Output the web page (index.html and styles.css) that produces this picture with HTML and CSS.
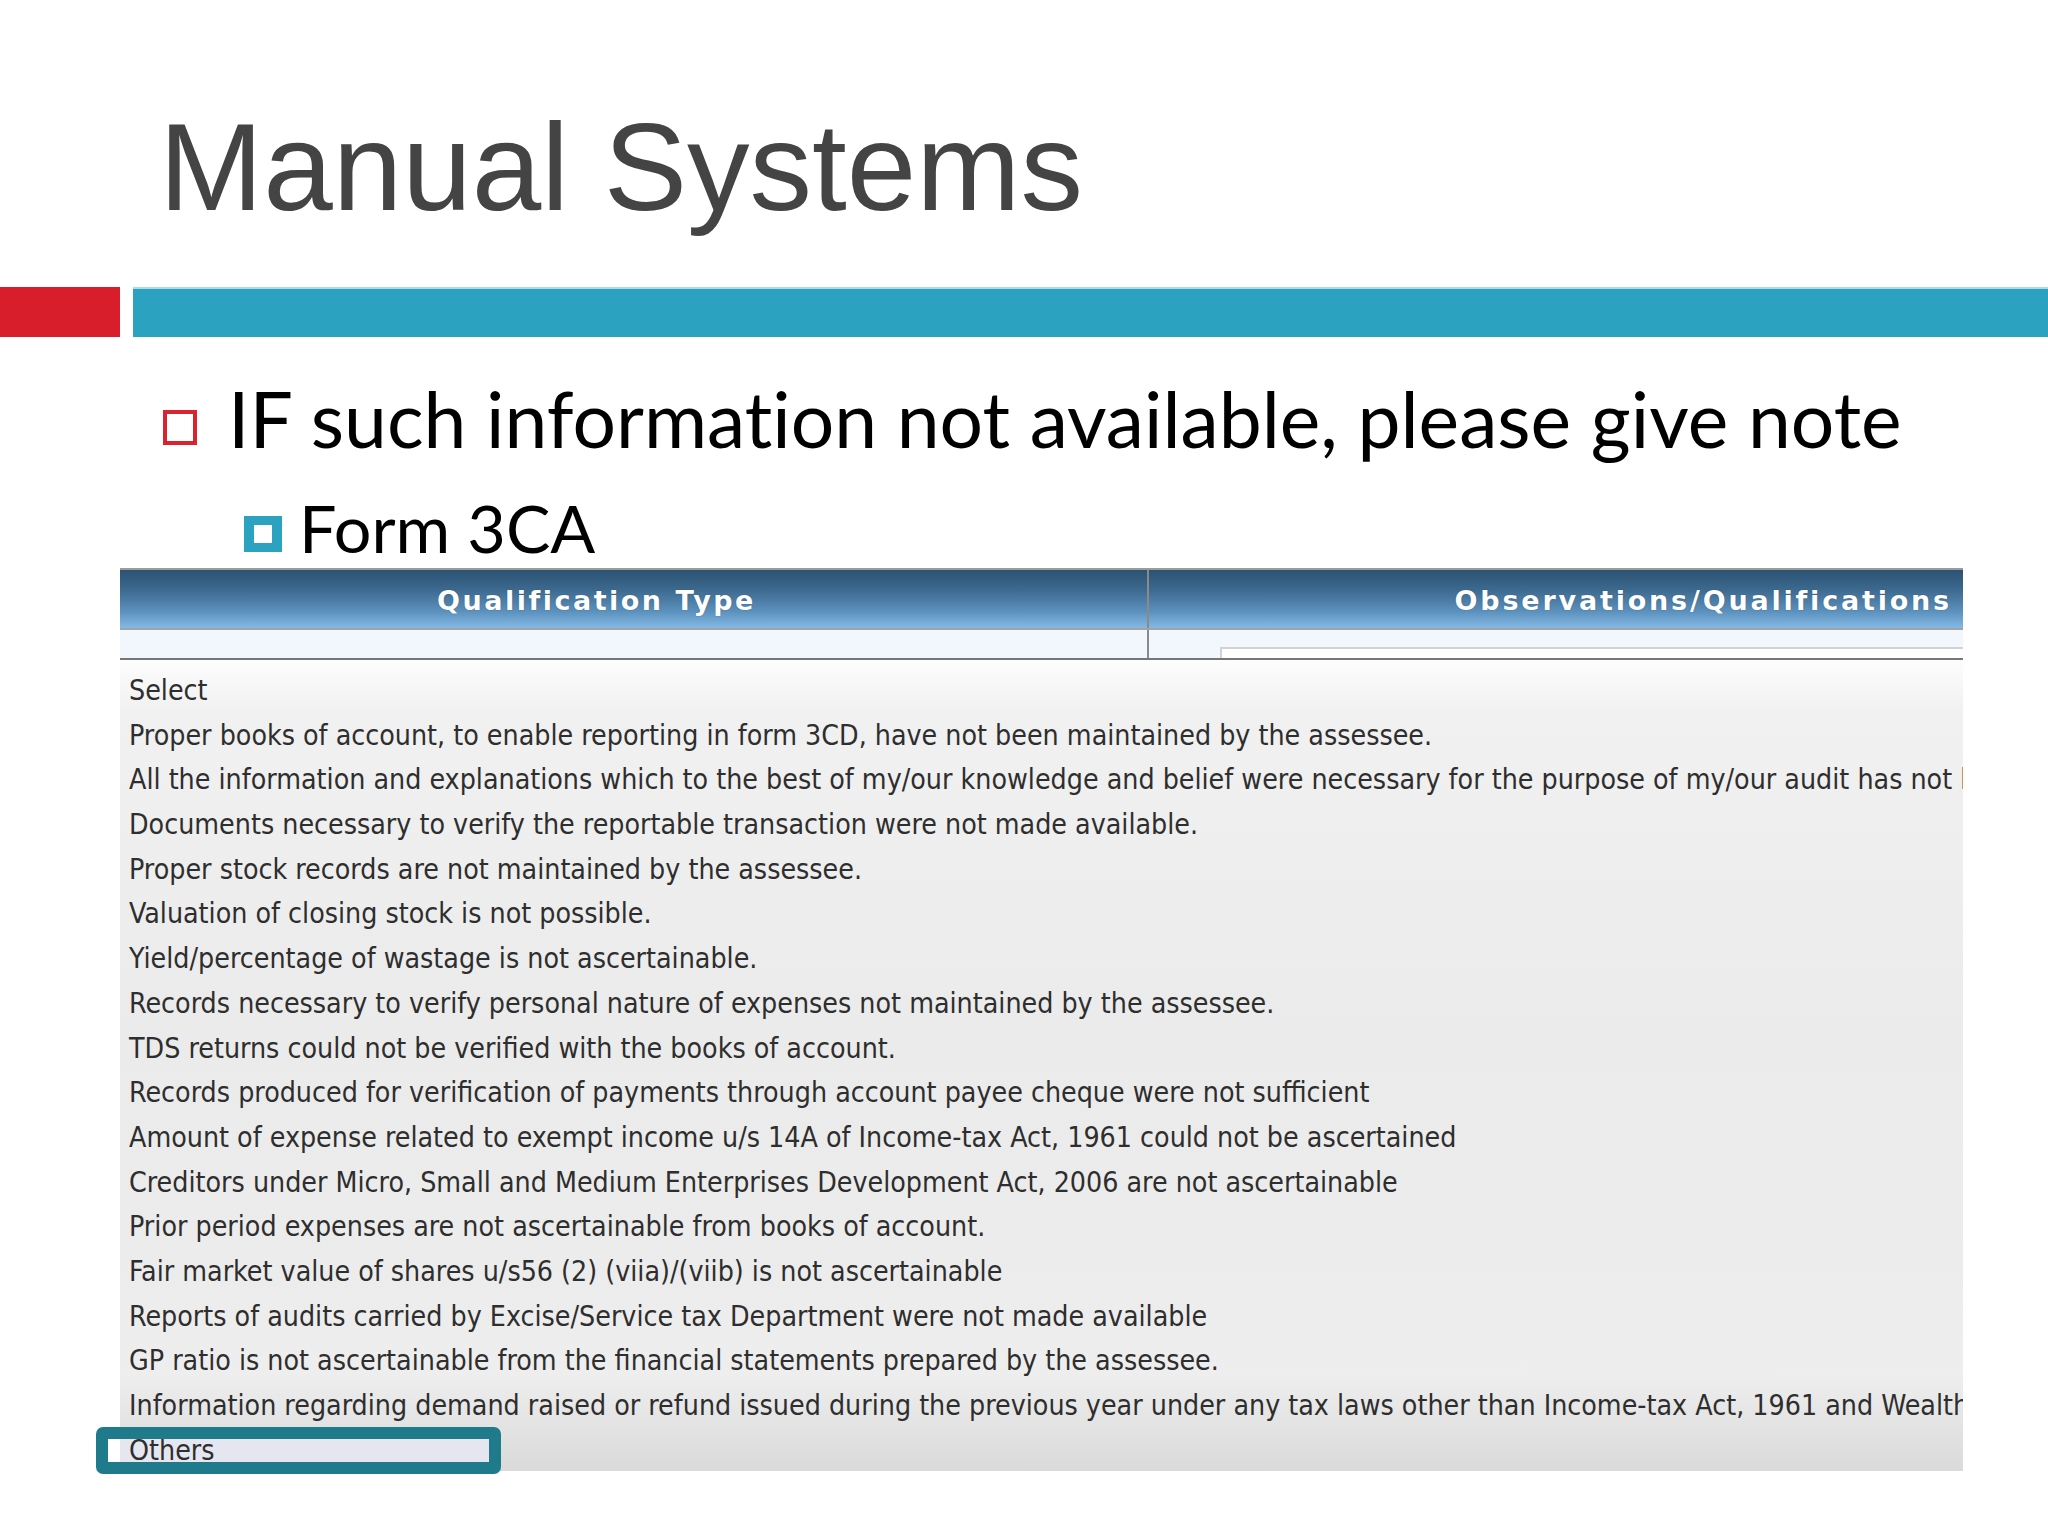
FILE: index.html
```html
<!DOCTYPE html>
<html>
<head>
<meta charset="utf-8">
<title>Manual Systems</title>
<link rel="stylesheet" href="styles.css">
</head>
<body>
<div class="slide">
  <h1 class="title">Manual Systems</h1>
  <div class="bars"><div class="bar-red"></div><div class="bar-blue"></div></div>
  <div class="b1"><span class="sq-red"></span><span class="b1-text">IF such information not available, please give note</span></div>
  <div class="b2"><span class="sq-blue"><span class="sq-blue-in"></span></span><span class="b2-text">Form 3CA</span></div>
  <div class="shot">
    <div class="hdr">
      <div class="hdr-c1">Qualification Type</div>
      <div class="hdr-div"></div>
      <div class="hdr-c2">Observations/Qualifications</div>
    </div>
    <div class="sub">
      <div class="sub-c1"></div>
      <div class="hdr-div"></div>
      <div class="sub-c2"><div class="field"></div></div>
    </div>
    <div class="list">
      <div class="opt">Select</div>
      <div class="opt">Proper books of account, to enable reporting in form 3CD, have not been maintained by the assessee.</div>
      <div class="opt">All the information and explanations which to the best of my/our knowledge and belief were necessary for the purpose of my/our audit has not been obtained.</div>
      <div class="opt">Documents necessary to verify the reportable transaction were not made available.</div>
      <div class="opt">Proper stock records are not maintained by the assessee.</div>
      <div class="opt">Valuation of closing stock is not possible.</div>
      <div class="opt">Yield/percentage of wastage is not ascertainable.</div>
      <div class="opt">Records necessary to verify personal nature of expenses not maintained by the assessee.</div>
      <div class="opt">TDS returns could not be verified with the books of account.</div>
      <div class="opt">Records produced for verification of payments through account payee cheque were not sufficient</div>
      <div class="opt">Amount of expense related to exempt income u/s 14A of Income-tax Act, 1961 could not be ascertained</div>
      <div class="opt">Creditors under Micro, Small and Medium Enterprises Development Act, 2006 are not ascertainable</div>
      <div class="opt">Prior period expenses are not ascertainable from books of account.</div>
      <div class="opt">Fair market value of shares u/s56 (2) (viia)/(viib) is not ascertainable</div>
      <div class="opt">Reports of audits carried by Excise/Service tax Department were not made available</div>
      <div class="opt">GP ratio is not ascertainable from the financial statements prepared by the assessee.</div>
      <div class="opt">Information regarding demand raised or refund issued during the previous year under any tax laws other than Income-tax Act, 1961 and Wealth tax Act</div>
      <div class="opt opt-sel">Others</div>
    </div>
  </div>
  <div class="callout"></div>
</div>
</body>
</html>
```

FILE: styles.css
```css
html, body {
  margin: 0;
  padding: 0;
  background: #ffffff;
}

.slide {
  position: relative;
  width: 2048px;
  height: 1536px;
  overflow: hidden;
}

.title {
  margin: 0;
  padding: 104px 0 0 159px;
  height: 125px;
  font-family: "Liberation Sans", Arial, sans-serif;
  font-weight: normal;
  font-size: 125px;
  line-height: 125px;
  color: #444444;
  white-space: nowrap;
}

.bars {
  margin-top: 58px;
  height: 50px;
  display: flex;
  gap: 13px;
}

.bar-red {
  width: 120px;
  background: #d91e2b;
}

.bar-blue {
  flex: 1;
  background: #2ba2c0;
  border-top: 2px solid #a9dbe8;
}

.b1 {
  margin-top: 38px;
  height: 86px;
  display: flex;
  align-items: flex-start;
  padding-left: 163px;
  font-family: Lato, "Open Sans", sans-serif;
  font-size: 76.8px;
  line-height: 86px;
  color: #000000;
  white-space: nowrap;
  font-variant-ligatures: none;
}

.sq-red {
  flex: none;
  width: 26px;
  height: 27px;
  margin-top: 35px;
  margin-right: 31px;
  border: 4px solid #d9232e;
}

.b2 {
  margin-top: 29px;
  height: 74px;
  display: flex;
  align-items: flex-start;
  padding-left: 244px;
  font-family: Lato, "Open Sans", sans-serif;
  font-size: 66.5px;
  line-height: 74px;
  color: #000000;
  white-space: nowrap;
}

.sq-blue {
  flex: none;
  width: 38px;
  height: 36px;
  margin-top: 26px;
  margin-right: 17px;
  background: #2ba3c0;
  display: flex;
  align-items: center;
  justify-content: center;
}

.sq-blue-in {
  width: 18px;
  height: 18px;
  background: #ffffff;
}

.shot {
  margin: 4px 0 0 120px;
  width: 1843px;
  height: 903px;
  overflow: hidden;
  font-family: "DejaVu Sans Condensed", "DejaVu Sans", sans-serif;
}

.hdr {
  height: 58px;
  display: flex;
  border-top: 2px solid #9b9b9b;
  border-bottom: 2px solid #a3a3a3;
  background: linear-gradient(#2c5273 0%, #3d6a90 35%, #5b8fbb 70%, #83b9e6 100%);
  color: #ffffff;
  font-family: "DejaVu Sans", sans-serif;
  font-weight: bold;
  font-size: 27px;
  line-height: 56px;
  white-space: nowrap;
  text-shadow: 0 0 1px rgba(0, 30, 60, 0.5);
}

.hdr-c1 {
  width: 1027px;
  padding: 3px 0 0 317px;
  box-sizing: border-box;
  letter-spacing: 2.5px;
}

.hdr-div {
  width: 2px;
  background: #8a8a8a;
}

.hdr-c2 {
  flex: 1;
  padding: 3px 11px 0 0;
  text-align: right;
  letter-spacing: 2.8px;
}

.sub {
  height: 28px;
  display: flex;
  background: #f2f7fd;
  border-bottom: 2px solid #777777;
}

.sub-c1 {
  width: 1027px;
}

.sub-c2 {
  flex: 1;
  padding: 17px 0 0 71px;
  box-sizing: border-box;
}

.field {
  height: 9px;
  border-top: 2px solid #cfd3d6;
  border-left: 2px solid #cfd3d6;
  background: #ffffff;
}

.list {
  height: 802px;
  padding-top: 9px;
  background: linear-gradient(#fdfdfd 0%, #f1f1f1 6%, #ebebeb 45%, #ececec 75%, #eeeeee 88%, #dadada 100%);
}

.opt {
  height: 44.7px;
  padding-left: 9px;
  font-size: 28.3px;
  line-height: 44.7px;
  color: #2e2e2e;
  white-space: nowrap;
}

.opt-sel {
  background: linear-gradient(90deg, #e6e6f0 0, #e6e6f0 380px, transparent 380px);
}

.callout {
  position: absolute;
  left: 96px;
  top: 1427px;
  width: 381px;
  height: 23px;
  border: 12px solid #1f7b8c;
  border-radius: 7px;
}
```
